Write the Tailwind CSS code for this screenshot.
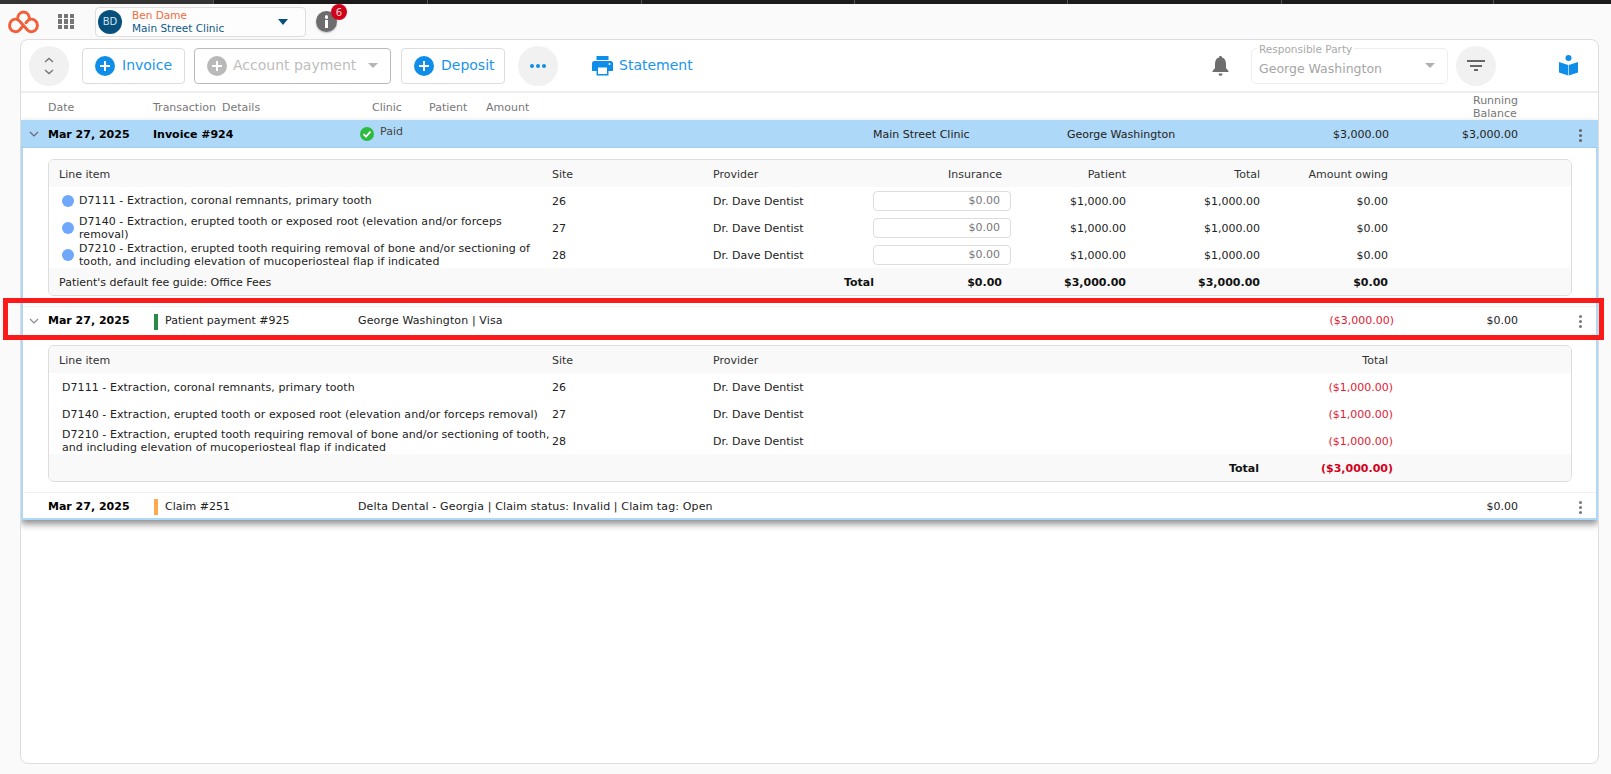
<!DOCTYPE html>
<html lang="en">
<head>
  <meta charset="UTF-8">
  <title>Account transactions</title>
  <script src="https://cdn.jsdelivr.net/npm/@tailwindcss/browser@4"></script>
</head>
<body class="bg-[#fafafa] h-[774px] overflow-hidden relative font-['DejaVu_Sans',sans-serif] text-[11px] text-[#222]">
  <!-- browser tab strip -->
  <div class="flex h-[4px] bg-[#1b1b1b]">
    <div class="w-[214px] bg-[#333] border-r border-[#555]"></div>
    <div class="w-[214px] border-r border-[#555]"></div>
    <div class="w-[214px] border-r border-[#555]"></div>
    <div class="w-[213px] border-r border-[#555]"></div>
    <div class="w-[213px] border-r border-[#555]"></div>
    <div class="w-[214px] border-r border-[#555]"></div>
    <div class="w-[212px] border-r border-[#555]"></div>
  </div>

  <!-- top nav -->
  <div class="h-[35px] flex items-center relative">
    <svg class="ml-[8px] w-[31px] h-[24px]" viewBox="0 0 31 24" fill="none" stroke="#f0603a" stroke-width="3" stroke-linecap="round" stroke-linejoin="round">
      <path d="M9.500 9.600C9.500 5 12 2 15.500 2S21.500 5 21.500 9.600"/>
      <path d="M14.500 16.500L11.500 20C9.500 22 6.500 22 4 20.500C1 18.500 .8 13 3.500 10.800C6 8.600 9.500 9 11.500 11L19.500 20C21.500 22 24.500 22 27 20.500C30 18.500 30.200 13 27.500 10.800C25 8.600 21.500 9 19.500 11L18 12.700"/>
    </svg>
    <div class="ml-[19px] grid grid-cols-3 gap-[1.5px] w-[16px]">
      <span class="h-[4.3px] bg-[#757575]"></span><span class="h-[4.3px] bg-[#757575]"></span><span class="h-[4.3px] bg-[#757575]"></span>
      <span class="h-[4.3px] bg-[#757575]"></span><span class="h-[4.3px] bg-[#757575]"></span><span class="h-[4.3px] bg-[#757575]"></span>
      <span class="h-[4.3px] bg-[#757575]"></span><span class="h-[4.3px] bg-[#757575]"></span><span class="h-[4.3px] bg-[#757575]"></span>
    </div>
    <div class="ml-[21px] w-[211px] h-[30px] border border-[#ddd] rounded-[4px] flex items-center pl-[2px] bg-white/60">
      <div class="w-[24px] h-[24px] rounded-full bg-[#07507c] text-[#cfe3ee] text-[10px] flex items-center justify-center">BD</div>
      <div class="ml-[10px] leading-[13px] text-[10.5px]">
        <div class="text-[#f26b3a]">Ben Dame</div>
        <div class="text-[#0d5a88]">Main Street Clinic</div>
      </div>
      <span class="ml-auto mr-[17px] w-0 h-0 border-x-[5px] border-x-transparent border-t-[6px] border-t-[#07507c]"></span>
    </div>
    <div class="ml-[10px] w-[21px] h-[21px] rounded-full bg-[#6d6d6d] flex flex-col items-center justify-center gap-[1.5px] shadow-[0_1px_2px_rgba(0,0,0,.25)]">
      <span class="w-[3.5px] h-[3.5px] rounded-full bg-white"></span>
      <span class="w-[3.5px] h-[8px] bg-white"></span>
    </div>
    <span class="absolute left-[331px] top-0 w-[16px] h-[16px] rounded-full bg-[#d0021b] text-[#f6d5d5] text-[10px] flex items-center justify-center">6</span>
  </div>

  <!-- main card -->
  <div class="ml-[20px] w-[1579px] h-[725px] bg-white border border-[#ddd] rounded-[8px] overflow-hidden flex flex-col">
    <!-- toolbar -->
    <div class="h-[53px] shrink-0 border-b-2 border-[#eee] flex items-center">
      <div class="ml-[8px] w-[40px] h-[40px] rounded-full bg-[#f1f1f1] flex items-center justify-center">
        <svg class="w-[12px] h-[20px]" viewBox="0 0 12 20" fill="none" stroke="#777" stroke-width="1.4"><path d="M2 6l4-3.500L10 6"/><path d="M2 14l4 3.500L10 14"/></svg>
      </div>
      <button class="ml-[13px] w-[103px] h-[36px] border border-[#ddd] rounded-[4px] flex items-center pl-[12px] text-[14px] text-[#1a94ee]">
        <svg class="w-[20px] h-[20px] mr-[7px]" viewBox="0 0 20 20"><circle cx="10" cy="10" r="10" fill="#0f8ee9"/><path d="M10 5v10M5 10h10" stroke="#fff" stroke-width="2"/></svg>Invoice
      </button>
      <button class="ml-[9px] w-[197px] h-[36px] border border-[#bbb] rounded-[4px] flex items-center pl-[12px] text-[14px] text-[#bdbdbd]">
        <svg class="w-[20px] h-[20px] mr-[6px]" viewBox="0 0 20 20"><circle cx="10" cy="10" r="10" fill="#b9b9b9"/><path d="M10 5v10M5 10h10" stroke="#fff" stroke-width="2"/></svg>Account payment
        <span class="ml-[12px] w-0 h-0 border-x-[5px] border-x-transparent border-t-[5px] border-t-[#b5b5b5]"></span>
      </button>
      <button class="ml-[10px] w-[104px] h-[36px] border border-[#ddd] rounded-[4px] flex items-center pl-[12px] text-[14px] text-[#1a94ee]">
        <svg class="w-[20px] h-[20px] mr-[7px]" viewBox="0 0 20 20"><circle cx="10" cy="10" r="10" fill="#0f8ee9"/><path d="M10 5v10M5 10h10" stroke="#fff" stroke-width="2"/></svg>Deposit
      </button>
      <div class="ml-[13px] w-[40px] h-[40px] rounded-full bg-[#f1f1f1] flex items-center justify-center gap-[2px]">
        <span class="w-[4px] h-[4px] rounded-full bg-[#0f8ee9]"></span><span class="w-[4px] h-[4px] rounded-full bg-[#0f8ee9]"></span><span class="w-[4px] h-[4px] rounded-full bg-[#0f8ee9]"></span>
      </div>
      <div class="ml-[34px] flex items-center text-[14px] text-[#1a94ee]">
        <svg class="w-[21px] h-[20px] mr-[6px]" viewBox="0 0 21 20"><path fill="#0f8ee9" d="M4.500 0h12v4h-12z"/><path fill="#0f8ee9" d="M2.500 5h16A2.500 2.500 0 0 1 21 7.500V15h-4.500v4.500h-12V15H0V7.500A2.500 2.500 0 0 1 2.500 5z"/><path fill="#fff" d="M6 11.500h9V18H6z"/><circle cx="17.500" cy="8" r="1" fill="#fff"/></svg>Statement
      </div>
      <svg class="ml-auto w-[17px] h-[20px]" viewBox="0 0 17 20" fill="#6e6e6e"><path d="M8.500 0c1 0 1.500.7 1.500 1.600C12.800 2.300 14 4.800 14 8v4l2.500 3v1H.5v-1L3 12V8c0-3.200 1.200-5.700 4-6.400C7 .7 7.500 0 8.500 0z"/><path d="M6.500 17.500h4c0 1.500-1 2.300-2 2.300s-2-.8-2-2.300z"/></svg>
      <div class="ml-[22px] relative w-[197px] h-[36px] border border-[#eee] rounded-[5px] mt-[1px]">
        <span class="absolute left-[5px] top-[-6px] bg-white px-[2px] text-[10.5px] leading-[12px] text-[#aaa]">Responsible Party</span>
        <span class="absolute left-[7px] top-[12px] text-[12.5px] leading-[16px] text-[#a5a5a5]">George Washington</span>
        <span class="absolute right-[12px] top-[14px] w-0 h-0 border-x-[5px] border-x-transparent border-t-[5px] border-t-[#b0b0b0]"></span>
      </div>
      <div class="ml-[8px] w-[40px] h-[40px] rounded-full bg-[#f1f1f1] flex flex-col items-center justify-center gap-[2.5px]">
        <span class="w-[18px] h-[2px] bg-[#666]"></span><span class="w-[12px] h-[2px] bg-[#666]"></span><span class="w-[4px] h-[2px] bg-[#666]"></span>
      </div>
      <svg class="ml-[63px] mr-[20px] w-[19px] h-[21px]" viewBox="0 0 19 21" fill="#0f8ee9"><circle cx="9.500" cy="3" r="3"/><path d="M0 7l9.200 3v10.500L0 17.500z"/><path d="M19 7l-9.200 3v10.500l9.200-3z"/></svg>
    </div>

    <!-- column headers -->
    <div class="h-[27px] shrink-0 flex items-center text-[#777]">
      <span class="mt-[3px] ml-[27px] w-[105px]">Date</span>
      <span class="mt-[3px] w-[69px]">Transaction</span>
      <span class="mt-[3px] w-[150px]">Details</span>
      <span class="mt-[3px] w-[57px]">Clinic</span>
      <span class="mt-[3px] w-[57px]">Patient</span>
      <span class="mt-[3px]">Amount</span>
      <span class="ml-auto mr-[81px] leading-[13px] w-[44px]">Running Balance</span>
    </div>

    <!-- expanded transactions -->
    <div class="border-x-2 border-b-2 border-[#aed8f7] h-[400px] shrink-0 shadow-[0_4px_7px_rgba(0,0,0,.45)] flex flex-col">
      <!-- invoice row -->
      <div class="h-[28px] -mx-[2px] bg-[#aed8f7] border-b border-[#a3cdec] flex items-center shrink-0">
        <svg class="ml-[8px] w-[10px] h-[6px]" viewBox="0 0 10 6" fill="none" stroke="#667" stroke-width="1.2"><path d="M1 1l4 4 4-4"/></svg>
        <span class="mt-[4px] ml-[9px] w-[105px] font-bold text-black">Mar 27, 2025</span>
        <span class="mt-[4px] w-[207px] font-bold text-black">Invoice #924</span>
        <span class="w-[513px] flex items-center gap-[6px] text-[#444]">
          <svg class="w-[14px] h-[14px]" viewBox="0 0 14 14"><circle cx="7" cy="7" r="7" fill="#2dbb3f"/><path d="M3.500 7.200l2.500 2.500 4.500-5" fill="none" stroke="#fff" stroke-width="1.8"/></svg>
          <span class="-mt-[2px]">Paid</span>
        </span>
        <span class="mt-[4px] w-[194px]">Main Street Clinic</span>
        <span class="mt-[4px] w-[130px]">George Washington</span>
        <span class="mt-[4px] w-[192px] text-right">$3,000.00</span>
        <span class="mt-[4px] w-[129px] text-right">$3,000.00</span>
        <span class="mt-[4px] ml-[61px] flex flex-col gap-[2px]"><i class="w-[3px] h-[3px] rounded-full bg-[#666]"></i><i class="w-[3px] h-[3px] rounded-full bg-[#666]"></i><i class="w-[3px] h-[3px] rounded-full bg-[#666]"></i></span>
      </div>

      <!-- invoice line items -->
      <div class="mt-[11px] ml-[25px] w-[1524px] h-[137px] shrink-0 border border-[#ddd] rounded-[6px] overflow-hidden flex flex-col">
        <div class="h-[27px] bg-[#f9f9f9] grid grid-cols-[503px_161px_161px_136px_116px_134px_128px] items-center text-[#333]">
          <span class="mt-[3px] pl-[10px]">Line item</span>
          <span class="mt-[3px]">Site</span>
          <span class="mt-[3px]">Provider</span>
          <span class="mt-[3px] text-right pr-[8px]">Insurance</span>
          <span class="mt-[3px] text-right">Patient</span>
          <span class="mt-[3px] text-right">Total</span>
          <span class="mt-[3px] text-right">Amount owing</span>
        </div>
        <div class="h-[27px] grid grid-cols-[503px_161px_161px_136px_116px_134px_128px] items-center">
          <div class="pl-[13px] flex items-center gap-[5px]"><span class="w-[12px] h-[12px] rounded-full bg-[#6fa8fa] shrink-0"></span><span class="w-[461px] leading-[13px] tracking-[0.06px]">D7111 - Extraction, coronal remnants, primary tooth</span></div>
          <span class="mt-[3px]">26</span>
          <span class="mt-[3px]">Dr. Dave Dentist</span>
          <span class="-mx-[1px] h-[20px] border border-[#ddd] rounded-[4px] text-right pr-[10px] leading-[17px] text-[#777]">$0.00</span>
          <span class="mt-[3px] text-right">$1,000.00</span>
          <span class="mt-[3px] text-right">$1,000.00</span>
          <span class="mt-[3px] text-right">$0.00</span>
        </div>
        <div class="h-[27px] grid grid-cols-[503px_161px_161px_136px_116px_134px_128px] items-center">
          <div class="pl-[13px] flex items-center gap-[5px]"><span class="w-[12px] h-[12px] rounded-full bg-[#6fa8fa] shrink-0"></span><span class="w-[461px] leading-[13px] tracking-[0.06px]">D7140 - Extraction, erupted tooth or exposed root (elevation and/or forceps removal)</span></div>
          <span class="mt-[3px]">27</span>
          <span class="mt-[3px]">Dr. Dave Dentist</span>
          <span class="-mx-[1px] h-[20px] border border-[#ddd] rounded-[4px] text-right pr-[10px] leading-[17px] text-[#777]">$0.00</span>
          <span class="mt-[3px] text-right">$1,000.00</span>
          <span class="mt-[3px] text-right">$1,000.00</span>
          <span class="mt-[3px] text-right">$0.00</span>
        </div>
        <div class="h-[27px] grid grid-cols-[503px_161px_161px_136px_116px_134px_128px] items-center">
          <div class="pl-[13px] flex items-center gap-[5px]"><span class="w-[12px] h-[12px] rounded-full bg-[#6fa8fa] shrink-0"></span><span class="w-[461px] leading-[13px] tracking-[0.06px]">D7210 - Extraction, erupted tooth requiring removal of bone and/or sectioning of tooth, and including elevation of mucoperiosteal flap if indicated</span></div>
          <span class="mt-[3px]">28</span>
          <span class="mt-[3px]">Dr. Dave Dentist</span>
          <span class="-mx-[1px] h-[20px] border border-[#ddd] rounded-[4px] text-right pr-[10px] leading-[17px] text-[#777]">$0.00</span>
          <span class="mt-[3px] text-right">$1,000.00</span>
          <span class="mt-[3px] text-right">$1,000.00</span>
          <span class="mt-[3px] text-right">$0.00</span>
        </div>
        <div class="flex-1 bg-[#f9f9f9] grid grid-cols-[825px_136px_116px_134px_128px] items-center font-bold text-[#111]">
          <div class="mt-[3px] flex justify-between"><span class="pl-[10px] font-normal text-[#222]">Patient's default fee guide: Office Fees</span><span>Total</span></div>
          <span class="mt-[3px] text-right pr-[8px]">$0.00</span>
          <span class="mt-[3px] text-right">$3,000.00</span>
          <span class="mt-[3px] text-right">$3,000.00</span>
          <span class="mt-[3px] text-right">$0.00</span>
        </div>
      </div>

      <!-- patient payment row -->
      <div class="mt-[10px] h-[30px] shrink-0 border-t border-[#f0f0f0] flex items-center">
        <svg class="ml-[6px] -mt-[1px] w-[10px] h-[6px]" viewBox="0 0 10 6" fill="none" stroke="#889" stroke-width="1.2"><path d="M1 1l4 4 4-4"/></svg>
        <span class="ml-[9px] w-[105px] font-bold text-black">Mar 27, 2025</span>
        <span class="ml-[1px] w-[4px] h-[16px] bg-[#2a8a46]"></span>
        <span class="ml-[7px] w-[193px]">Patient payment #925</span>
        <span class="w-[700px] tracking-[0.12px]">George Washington | Visa</span>
        <span class="w-[336px] text-right text-[#e01b32]">($3,000.00)</span>
        <span class="w-[124px] text-right">$0.00</span>
        <span class="ml-[61px] flex flex-col gap-[2px]"><i class="w-[3px] h-[3px] rounded-full bg-[#777]"></i><i class="w-[3px] h-[3px] rounded-full bg-[#777]"></i><i class="w-[3px] h-[3px] rounded-full bg-[#777]"></i></span>
      </div>

      <!-- payment line items -->
      <div class="mt-[9px] ml-[25px] w-[1524px] h-[137px] shrink-0 border border-[#ddd] rounded-[6px] overflow-hidden flex flex-col">
        <div class="h-[27px] bg-[#f9f9f9] grid grid-cols-[503px_161px_541px_139px] items-center text-[#333]">
          <span class="mt-[3px] pl-[10px]">Line item</span>
          <span class="mt-[3px]">Site</span>
          <span class="mt-[3px]">Provider</span>
          <span class="mt-[3px] text-right pr-[5px]">Total</span>
        </div>
        <div class="h-[27px] grid grid-cols-[503px_161px_541px_139px] items-center">
          <span class="mt-[1px] pl-[13px] leading-[13px] tracking-[0.06px]">D7111 - Extraction, coronal remnants, primary tooth</span>
          <span class="mt-[3px]">26</span>
          <span class="mt-[3px]">Dr. Dave Dentist</span>
          <span class="mt-[3px] text-right text-[#e01b32]">($1,000.00)</span>
        </div>
        <div class="h-[27px] grid grid-cols-[503px_161px_541px_139px] items-center">
          <span class="mt-[1px] pl-[13px] leading-[13px] tracking-[0.06px]">D7140 - Extraction, erupted tooth or exposed root (elevation and/or forceps removal)</span>
          <span class="mt-[3px]">27</span>
          <span class="mt-[3px]">Dr. Dave Dentist</span>
          <span class="mt-[3px] text-right text-[#e01b32]">($1,000.00)</span>
        </div>
        <div class="h-[27px] grid grid-cols-[503px_161px_541px_139px] items-center">
          <span class="pl-[13px] leading-[13px] tracking-[0.06px]">D7210 - Extraction, erupted tooth requiring removal of bone and/or sectioning of tooth, and including elevation of mucoperiosteal flap if indicated</span>
          <span class="mt-[3px]">28</span>
          <span class="mt-[3px]">Dr. Dave Dentist</span>
          <span class="mt-[3px] text-right text-[#e01b32]">($1,000.00)</span>
        </div>
        <div class="flex-1 bg-[#f9f9f9] grid grid-cols-[1210px_134px] items-center font-bold text-[#111]">
          <span class="mt-[3px] text-right">Total</span>
          <span class="mt-[3px] text-right text-[#d0021b]">($3,000.00)</span>
        </div>
      </div>

      <!-- claim row -->
      <div class="mt-[10px] flex-1 border-t border-[#f0f0f0] flex items-center pt-[3px]">
        <span class="ml-[25px] w-[105px] font-bold text-black">Mar 27, 2025</span>
        <span class="ml-[1px] w-[4px] h-[16px] bg-[#ffa94d]"></span>
        <span class="ml-[7px] w-[193px]">Claim #251</span>
        <span class="w-[1036px] tracking-[0.13px]">Delta Dental - Georgia | Claim status: Invalid | Claim tag: Open</span>
        <span class="w-[124px] text-right">$0.00</span>
        <span class="ml-[61px] flex flex-col gap-[2px]"><i class="w-[3px] h-[3px] rounded-full bg-[#777]"></i><i class="w-[3px] h-[3px] rounded-full bg-[#777]"></i><i class="w-[3px] h-[3px] rounded-full bg-[#777]"></i></span>
      </div>
    </div>
  </div>

  <!-- highlight annotation -->
  <div class="absolute left-[3px] top-[298px] w-[1601px] h-[42px] border-[5px] border-[#fb1a1a]"></div>
</body>
</html>
